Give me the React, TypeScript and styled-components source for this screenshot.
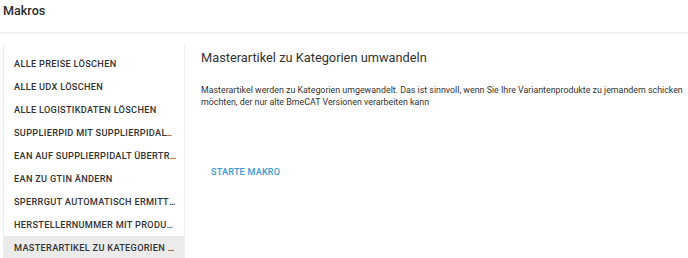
import React, { useState } from "react";
import styled, { createGlobalStyle } from "styled-components";

const GlobalStyle = createGlobalStyle`
  html, body {
    margin: 0;
    padding: 0;
    background: #ffffff;
    font-family: Roboto, "Liberation Sans", Arial, sans-serif;
    color: #333333;
  }
`;

const Header = styled.header`
  height: 34px;
  display: flex;
  align-items: flex-start;
  padding: 2px 0 0 3px;
  box-sizing: border-box;
  border-bottom: 2px solid #f3f3f3;
`;

const Title = styled.h1`
  margin: 0;
  font-size: 12.6px;
  line-height: 17px;
  font-weight: 500;
  color: #2b2b2b;
`;

const Body = styled.div`
  display: flex;
  padding-top: 11px;
`;

const Sidebar = styled.nav`
  width: 180px;
  margin-left: 3px;
  padding-top: 7px;
  display: flex;
  flex-direction: column;
  border-left: 1px solid #ececec;
  border-right: 1px solid #ececec;
  flex-shrink: 0;
`;

const MacroTab = styled.button<{ $active?: boolean }>`
  height: 23px;
  padding: 0 7px 0 10px;
  border: none;
  background: ${(p) => (p.$active ? "#ebebeb" : "transparent")};
  text-align: left;
  font-family: inherit;
  font-size: 9.2px;
  font-weight: 500;
  letter-spacing: 0.3px;
  text-transform: uppercase;
  color: #333333;
  white-space: nowrap;
  overflow: hidden;
  text-overflow: ellipsis;
  cursor: pointer;
`;

const Content = styled.section`
  flex: 1;
  padding: 4px 0 0 16px;
`;

const ContentTitle = styled.h2`
  margin: 0;
  font-size: 12.8px;
  line-height: 18px;
  font-weight: 400;
  color: #333333;
`;

const Description = styled.p`
  margin: 17px 0 0;
  font-size: 8.85px;
  line-height: 12px;
  color: #333333;
`;

const StartButton = styled.button`
  margin: 53px 0 0 0;
  padding: 6px 10px;
  border: none;
  background: transparent;
  font-family: inherit;
  font-size: 9.1px;
  font-weight: 500;
  letter-spacing: 0.2px;
  text-transform: uppercase;
  color: #3b9ad9;
  cursor: pointer;
`;

const macros = [
  {
    label: "Alle Preise löschen",
    title: "Alle Preise löschen",
    text: "Alle Preise werden gelöscht.",
  },
  { label: "Alle UDX löschen", title: "Alle UDX löschen", text: "Alle UDX werden gelöscht." },
  {
    label: "Alle Logistikdaten löschen",
    title: "Alle Logistikdaten löschen",
    text: "Alle Logistikdaten werden gelöscht.",
  },
  {
    label: "SupplierPID mit SupplierPIDAlt tauschen",
    title: "SupplierPID mit SupplierPIDAlt tauschen",
    text: "SupplierPID und SupplierPIDAlt werden getauscht.",
  },
  {
    label: "EAN auf SupplierPIDAlt übertragen",
    title: "EAN auf SupplierPIDAlt übertragen",
    text: "Die EAN wird in die SupplierPIDAlt übertragen.",
  },
  { label: "EAN zu GTIN ändern", title: "EAN zu GTIN ändern", text: "EAN wird zu GTIN geändert." },
  {
    label: "Sperrgut automatisch ermitteln",
    title: "Sperrgut automatisch ermitteln",
    text: "Sperrgut wird automatisch ermittelt.",
  },
  {
    label: "Herstellernummer mit Produktnummer tauschen",
    title: "Herstellernummer mit Produktnummer tauschen",
    text: "Herstellernummer und Produktnummer werden getauscht.",
  },
  {
    label: "Masterartikel zu Kategorien umwandeln",
    title: "Masterartikel zu Kategorien umwandeln",
    text: "Masterartikel werden zu Kategorien umgewandelt. Das ist sinnvoll, wenn Sie Ihre Variantenprodukte zu jemandem schicken möchten, der nur alte BmeCAT Versionen verarbeiten kann",
  },
];

export default function App() {
  const [selected, setSelected] = useState(8);
  const current = macros[selected];

  return (
    <>
      <GlobalStyle />
      <Header>
        <Title>Makros</Title>
      </Header>
      <Body>
        <Sidebar>
          {macros.map((m, i) => (
            <MacroTab key={m.label} $active={i === selected} onClick={() => setSelected(i)}>
              {m.label}
            </MacroTab>
          ))}
        </Sidebar>
        <Content>
          <ContentTitle>{current.title}</ContentTitle>
          <Description>{current.text}</Description>
          <StartButton>Starte Makro</StartButton>
        </Content>
      </Body>
    </>
  );
}
